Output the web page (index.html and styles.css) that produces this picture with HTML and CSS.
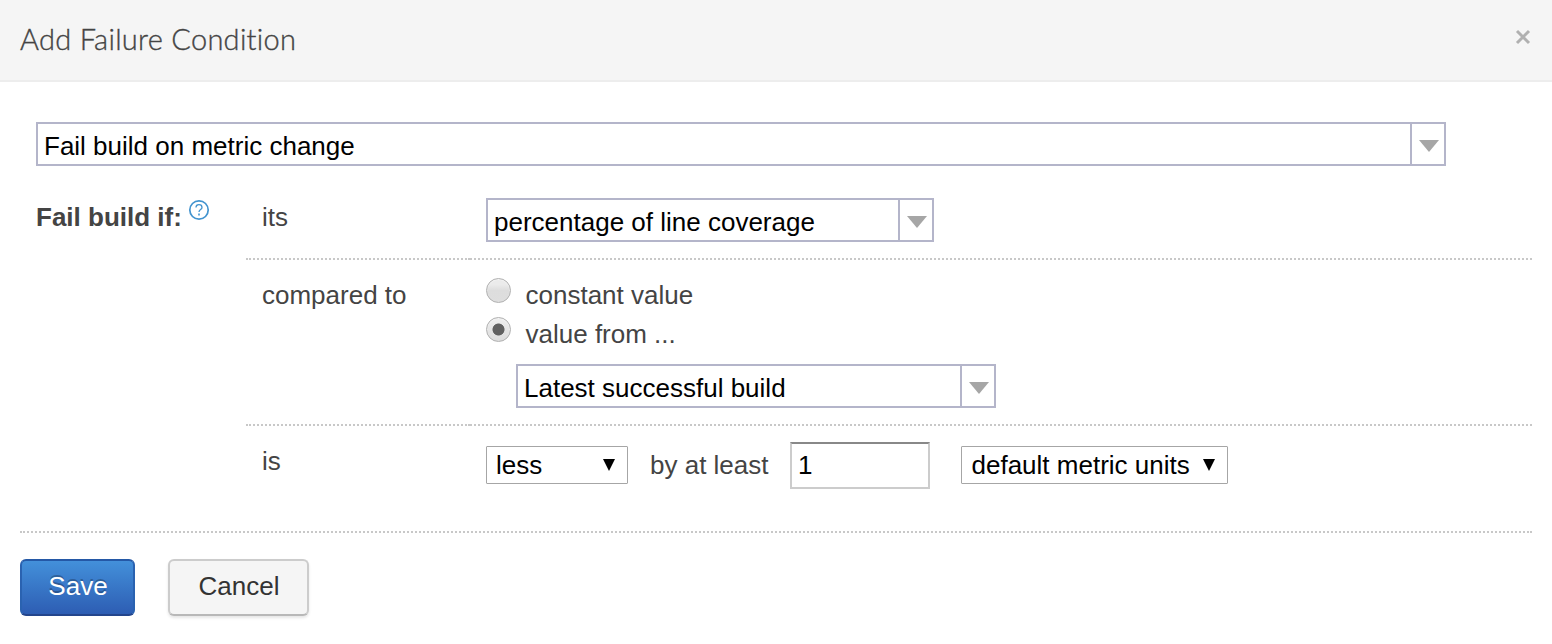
FILE: index.html
```html
<!DOCTYPE html>
<html lang="en">
<head>
<meta charset="utf-8">
<title>Add Failure Condition</title>
<link rel="stylesheet" href="styles.css">
</head>
<body>
<div class="dialog">
  <header class="header">
    <h1 class="title">Add Failure Condition</h1>
    <svg class="close" width="16" height="16" viewBox="0 0 16 16"><path d="M2 2 14 14M14 2 2 14" stroke="#b0b0b0" stroke-width="3"/></svg>
  </header>
  <main class="content">
    <div class="combo combo-type">
      <span class="combo-text">Fail build on metric change</span>
      <span class="combo-button"><svg width="20" height="12" viewBox="0 0 20 12"><path d="M0 0h20L10 12z" fill="#a6a6a6"/></svg></span>
    </div>
    <div class="form">
      <div class="form-label">
        <b>Fail build if:</b>
        <svg class="help" width="22" height="22" viewBox="0 0 22 22" fill="none" stroke="#4394cf"><circle cx="11" cy="11" r="9.2" stroke-width="1.7"/><path d="M8 8.5C8 6.8 9.2 5.7 11 5.7s3 1.1 3 2.7c0 2.2-3 2.2-3 4.6" stroke-width="1.3"/><path d="M11 14.6v1.8" stroke-width="1.6"/></svg>
      </div>
      <div class="rows">
        <div class="row row-metric">
          <div class="name">its</div>
          <div class="value">
            <div class="combo combo-metric">
              <span class="combo-text">percentage of line coverage</span>
              <span class="combo-button"><svg width="20" height="12" viewBox="0 0 20 12"><path d="M0 0h20L10 12z" fill="#a6a6a6"/></svg></span>
            </div>
          </div>
        </div>
        <div class="row row-compare">
          <div class="name">compared to</div>
          <div class="value">
            <div class="option"><span class="radio"></span><span>constant value</span></div>
            <div class="option"><span class="radio checked"></span><span>value from ...</span></div>
            <div class="combo combo-build">
              <span class="combo-text">Latest successful build</span>
              <span class="combo-button"><svg width="20" height="12" viewBox="0 0 20 12"><path d="M0 0h20L10 12z" fill="#a6a6a6"/></svg></span>
            </div>
          </div>
        </div>
        <div class="row row-amount">
          <div class="name">is</div>
          <div class="value amount">
            <div class="select select-less"><span>less</span><svg width="12" height="12" viewBox="0 0 12 12"><path d="M0 0h12L6 12z"/></svg></div>
            <span class="by">by at least</span>
            <div class="number">1</div>
            <div class="select select-units"><span>default metric units</span><svg width="12" height="12" viewBox="0 0 12 12"><path d="M0 0h12L6 12z"/></svg></div>
          </div>
        </div>
      </div>
    </div>
    <footer class="footer">
      <button class="button primary">Save</button>
      <button class="button">Cancel</button>
    </footer>
  </main>
</div>
</body>
</html>
```
FILE: styles.css
```css
* { box-sizing: border-box; }
body {
  margin: 0;
  background: #fff;
  color: #444;
  font: 26px/30px "Liberation Sans", Arial, sans-serif;
}
.dialog { height: 644px; overflow: hidden; }
.header {
  display: flex;
  justify-content: space-between;
  height: 82px;
  padding: 21px 21px 0 20px;
  background: #f5f5f5;
  border-bottom: 2px solid #ededed;
}
.title {
  margin: 0;
  font: 300 29px/36px Lato, "Open Sans", sans-serif;
  letter-spacing: 0.28px;
  -webkit-text-stroke: 0.35px #444;
}
.close { margin-top: 8px; }
.content { padding: 40px 20px 0; }
.combo {
  display: flex;
  height: 44px;
  border: 2px solid #b4b5ca;
  color: #000;
}
.combo-text { flex: 1; padding: 7px 6px 0; white-space: nowrap; }
.combo-button {
  width: 34px;
  padding: 16px 0 0 7px;
  border-left: 2px solid #b4b5ca;
  line-height: 0;
}
.combo-type { width: 1410px; margin-left: 16px; }
.combo-metric { width: 448px; }
.combo-build { width: 480px; margin: 15px 0 0 30px; }
.form { display: flex; height: 365px; }
.form-label { display: flex; width: 226px; padding: 36px 0 0 16px; }
.help { margin: -3px 0 0 6px; }
.rows { flex: 1; }
.row { display: flex; }
.name, .value { border-bottom: 2px dotted #c8c8c8; }
.name { width: 224px; padding-left: 16px; }
.value { flex: 1; padding-left: 16px; }
.row-metric { height: 94px; }
.row-metric .name { padding-top: 36px; }
.row-metric .value { padding-top: 32px; }
.row-compare { height: 166px; }
.row-compare .name, .row-compare .value { padding-top: 20px; }
.option { display: flex; height: 39px; gap: 14.5px; }
.option + .option { height: 30px; }
.radio {
  width: 25px;
  height: 25px;
  margin-top: -2px;
  border: 1px solid #b0b0b0;
  border-radius: 50%;
  background: linear-gradient(#ebebeb 25%, #dddddd 50%, #dedede);
  box-shadow: inset 0 1px 1px #f4f4f4;
}
.checked { background: radial-gradient(circle, #606060 0 5.6px, transparent 6.4px), linear-gradient(#eee, #dcdcdc); }
.row-amount .name, .row-amount .value { border: 0; }
.row-amount .name { padding-top: 20px; }
.amount { display: flex; padding-top: 16px; color: #000; }
.select {
  display: flex;
  justify-content: space-between;
  height: 38px;
  margin-top: 4px;
  padding: 3px 12px 0 9px;
  border: 1px solid #a6a6a6;
  border-radius: 1px;
}
.select svg { margin-top: 9px; }
.select-less { width: 142px; }
.select-units { width: 267px; margin-left: 31px; padding-left: 9.5px; }
.by { width: 140px; margin: 8px 0 0 22px; color: #444; }
.number {
  width: 140px;
  height: 47px;
  padding: 6px 6px 0;
  border: 2px solid #ccc;
  border-top-color: #888;
}
.footer {
  display: flex;
  gap: 33px;
  padding-top: 26px;
  border-top: 2px dotted #c8c8c8;
}
.button {
  width: 141px;
  height: 57px;
  padding: 0 0 3px 1px;
  border: 2px solid #ccc;
  border-bottom-color: #b8b8b8;
  border-radius: 6px;
  background: #f5f5f5;
  box-shadow: 0 2px 3px rgba(0, 0, 0, .1);
  color: #333;
  font: inherit;
}
.primary {
  width: 115px;
  border-color: #2458a6 #2a62b0 #23458c;
  background: linear-gradient(#4390da, #2d5db3);
  box-shadow: none;
  color: #fff;
  text-shadow: 0 -2px 0 rgba(0, 0, 0, .25);
}
```
